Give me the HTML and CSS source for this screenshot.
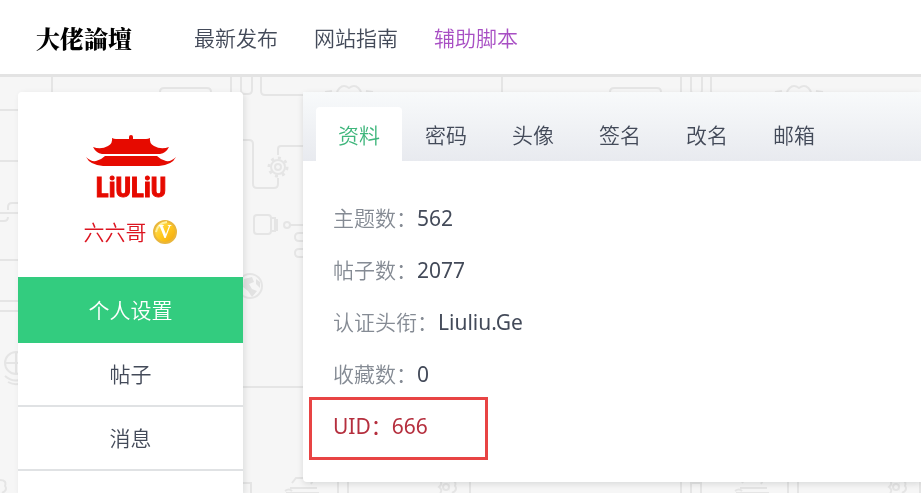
FILE: index.html
```html
<!DOCTYPE html>
<html lang="zh-CN">
<head>
  <meta charset="UTF-8">
  <meta name="viewport" content="width=device-width, initial-scale=1.0">
  <title>大佬論壇</title>
  <link rel="stylesheet" href="styles.css">
</head>
<body>

<!-- Background doodles -->
<svg class="page-bg" aria-hidden="true">
  <defs>
    <pattern id="doodles" width="450" height="600" patternUnits="userSpaceOnUse">
      <g fill="none" stroke="#e5e5e5" stroke-width="2">
        <path d="M52 70V100M160 100V92q0-4 4-4h43q4 0 4 4v8M231 70V110M241 70V90q0 4 4 4h3q4 0 4-4V70M261 70V91q0 4 4 4H303"/>
        <path d="M104 74h8M116 74h8" stroke-width="3"/>
        <path d="M337 100C335 89 342 83 349 88C356 83 363 89 361 100M325 92l7-1M366 91l7 1"/>
        <path d="M0 110H18M0 161H18M0 213H18M0 260H18M18 203h-6q-4 0-4 4v3M0 221h4q4 0 4-4M0 311h18M0 301h18"/>
        <path d="M243 140h6q4 0 4 4v40q0 4 4 4h17q4 0 4-4v-6M278 155v-6q0-3 3-3h22"/>
        <circle cx="278" cy="167" r="7"/>
        <circle cx="278" cy="167" r="3"/>
        <circle cx="278" cy="167" r="9" stroke-width="3" stroke-dasharray="3 4"/>
        <rect x="254" y="215" width="17" height="19" rx="3"/>
        <path d="M271 218h4v13h-4M275 220h2v10h-2"/>
        <circle cx="287" cy="225" r="3"/>
        <path d="M290 225h13M303 233h-4q-4 0-4 4t4 4h4M303 249h-4q-4 0-4 4t4 4h4"/>
        <circle cx="250" cy="286" r="12"/>
        <path d="M243 387H303"/>
        <circle cx="16" cy="363" r="11"/>
        <path d="M5 363h22M16 352v22M5 376q8 7 18 3M8 382q7 4 14 1"/>
        <path d="M0 480q7 0 5 6q3 4-3 7M285 491q4-3 7 0M290 488h27M292 483l4-5h18l-3 6M286 493h33M338 480v13M348 480v13M470 480v13M20 480v13M231 480v13M241 493v-10h10v10"/>
        <circle cx="446" cy="487" r="3"/>
        <path d="M440 480q3 4-1 7q4 3 1 6M452 480q-3 4 1 7q-4 3-1 6"/>
      </g>
      <path fill="#e2e2e2" d="M244 279l8-2 2 5-5 2 3 5 5 2-5 6-4-6-5-4zM256 279l4 3v6l-4-4z"/>
    </pattern>
  </defs>
  <rect width="100%" height="100%" fill="url(#doodles)"/>
</svg>

<header class="topbar">
  <a href="#" class="logo">大佬論壇</a>
  <nav class="topnav">
    <a href="#">最新发布</a>
    <a href="#">网站指南</a>
    <a href="#" class="purple">辅助脚本</a>
  </nav>
</header>

<div class="container">

  <!-- Sidebar -->
  <aside class="sidebar">
    <div class="profile">
      <svg class="avatar" width="92" height="72" viewBox="0 0 92 72" role="img" aria-label="LIULIU">
        <g fill="#e60a00">
          <circle cx="46" cy="3" r="2"/>
          <path d="M44 3h4v2h13q2 0 4-1q-1 5 4 8q7 4 15 1q-3 6-9 7H17q-6-1-9-7q8 3 15-1q5-3 4-8q2 1 4 1h13z"/>
          <path d="M20 22h52q4 4 9 5q5 1 10-4q-4 8-17 9H18q-13-1-17-9q5 5 10 4q5-1 9-5z"/>
        </g>
        <text class="avatar-text" x="46" y="63" text-anchor="middle">LiULiU</text>
      </svg>
      <div class="username">
        <span>六六哥</span>
        <svg width="26" height="26" viewBox="0 0 26 26" role="img" aria-label="认证">
          <defs>
            <linearGradient id="gold" x1="0" y1="0" x2="1" y2="1">
              <stop offset="0" stop-color="#ffe46a"/>
              <stop offset="0.5" stop-color="#ffc91f"/>
              <stop offset="1" stop-color="#f3a30c"/>
            </linearGradient>
          </defs>
          <circle cx="13" cy="13" r="11" fill="url(#gold)" stroke="#e9b63c" stroke-width="2"/>
          <path d="M4 13Q6 4 15 3" fill="none" stroke="#fff0a0" stroke-width="2"/>
          <text class="badge-text" x="13" y="19" text-anchor="middle">V</text>
        </svg>
      </div>
    </div>
    <nav class="menu">
      <a href="#" class="active">个人设置</a>
      <a href="#">帖子</a>
      <a href="#">消息</a>
    </nav>
  </aside>

  <!-- Profile panel -->
  <main class="panel">
    <nav class="tabs">
      <a href="#" class="active">资料</a>
      <a href="#">密码</a>
      <a href="#">头像</a>
      <a href="#">签名</a>
      <a href="#">改名</a>
      <a href="#">邮箱</a>
    </nav>
    <dl class="info">
      <div class="row"><dt>主题数：</dt><dd>562</dd></div>
      <div class="row"><dt>帖子数：</dt><dd>2077</dd></div>
      <div class="row"><dt>认证头衔：</dt><dd>Liuliu.Ge</dd></div>
      <div class="row"><dt>收藏数：</dt><dd>0</dd></div>
      <div class="row uid"><dt>UID：</dt><dd>666</dd></div>
    </dl>
  </main>

</div>

</body>
</html>
```
FILE: styles.css
```css
*,
*::after {
  box-sizing: border-box;
}
body {
  display: flex;
  flex-direction: column;
  min-height: 100vh;
  margin: 0;
  background: #f6f6f6;
  color: #434a59;
  font-family: "Noto Sans", "Noto Sans CJK SC", sans-serif;
  font-size: 21px;
  font-weight: 350;
  line-height: 32px;
}
a {
  color: inherit;
  text-decoration: none;
}
.page-bg {
  position: fixed;
  top: 0;
  left: 0;
  width: 100%;
  height: 100%;
  z-index: -1;
}

/* header */
.topbar {
  display: flex;
  align-items: center;
  gap: 62px;
  height: 74px;
  padding: 2px 36px 0;
  background: #fff;
  box-shadow: 0 3px 0 #e3e3e3;
}
.logo {
  color: #000;
  font-family: "Noto Serif CJK TC", "Noto Sans CJK TC", serif;
  font-size: 24px;
  font-weight: 900;
}
.topnav {
  display: flex;
  gap: 36px;
}
.purple {
  color: #a84fc4;
}

/* layout */
.container {
  display: flex;
  flex: 1;
  align-items: flex-start;
  gap: 60px;
  padding: 18px 0 0 18px;
}

/* sidebar */
.sidebar {
  flex: 0 0 225px;
  align-self: stretch;
  background: #fff;
  border-radius: 4px 4px 0 0;
  box-shadow: 2px 2px 6px rgba(0, 20, 20, 0.1);
}
.profile {
  display: flex;
  flex-direction: column;
  align-items: center;
  gap: 10px;
  padding: 42px 0 29px;
}
.avatar {
  overflow: visible;
}
.avatar-text {
  fill: #e60a00;
  stroke: #e60a00;
  font-family: "Roboto Condensed", "Open Sans Condensed", "Liberation Sans", sans-serif;
  font-size: 27px;
  font-weight: bold;
}
.username {
  display: flex;
  align-items: center;
  gap: 5px;
  color: #dc1420;
}
.badge-text {
  fill: #fff;
  font-family: "Liberation Serif", serif;
  font-size: 18px;
  font-weight: bold;
}
.menu a {
  display: block;
  height: 64px;
  padding-top: 15px;
  border-bottom: 2px solid #e0e2e4;
  text-align: center;
}
.menu .active {
  height: 66px;
  padding-top: 17px;
  border-bottom: 0;
  background: #33cc7f;
  color: #fff;
}

/* panel */
.panel {
  flex: 1;
  background: #fff;
  border-radius: 4px 0 0 4px;
  box-shadow: 0 2px 6px rgba(0, 20, 20, 0.12);
}
.tabs {
  display: flex;
  gap: 1px;
  padding: 15px 13px 0;
  background: linear-gradient(#f8fafb, #e8eaef);
}
.tabs a {
  height: 54px;
  padding: 12px 22px 0;
  border-radius: 4px 4px 0 0;
}
.tabs .active {
  background: #fff;
  color: #3fb67c;
}
.info {
  margin: 0;
  padding: 31px 30px 30px;
}
.row {
  position: relative;
  display: flex;
  align-items: center;
  height: 52px;
}
.row dt {
  color: #858b94;
}
.row dd {
  margin: 0;
  font-weight: 400;
}
.uid,
.uid dt {
  color: #b52f3e;
  font-weight: 400;
}
/* red frame around the uid */
.uid::after {
  content: "";
  position: absolute;
  top: -3px;
  bottom: -8px;
  left: -24px;
  width: 179px;
  border: 3px solid #e84444;
}
```
